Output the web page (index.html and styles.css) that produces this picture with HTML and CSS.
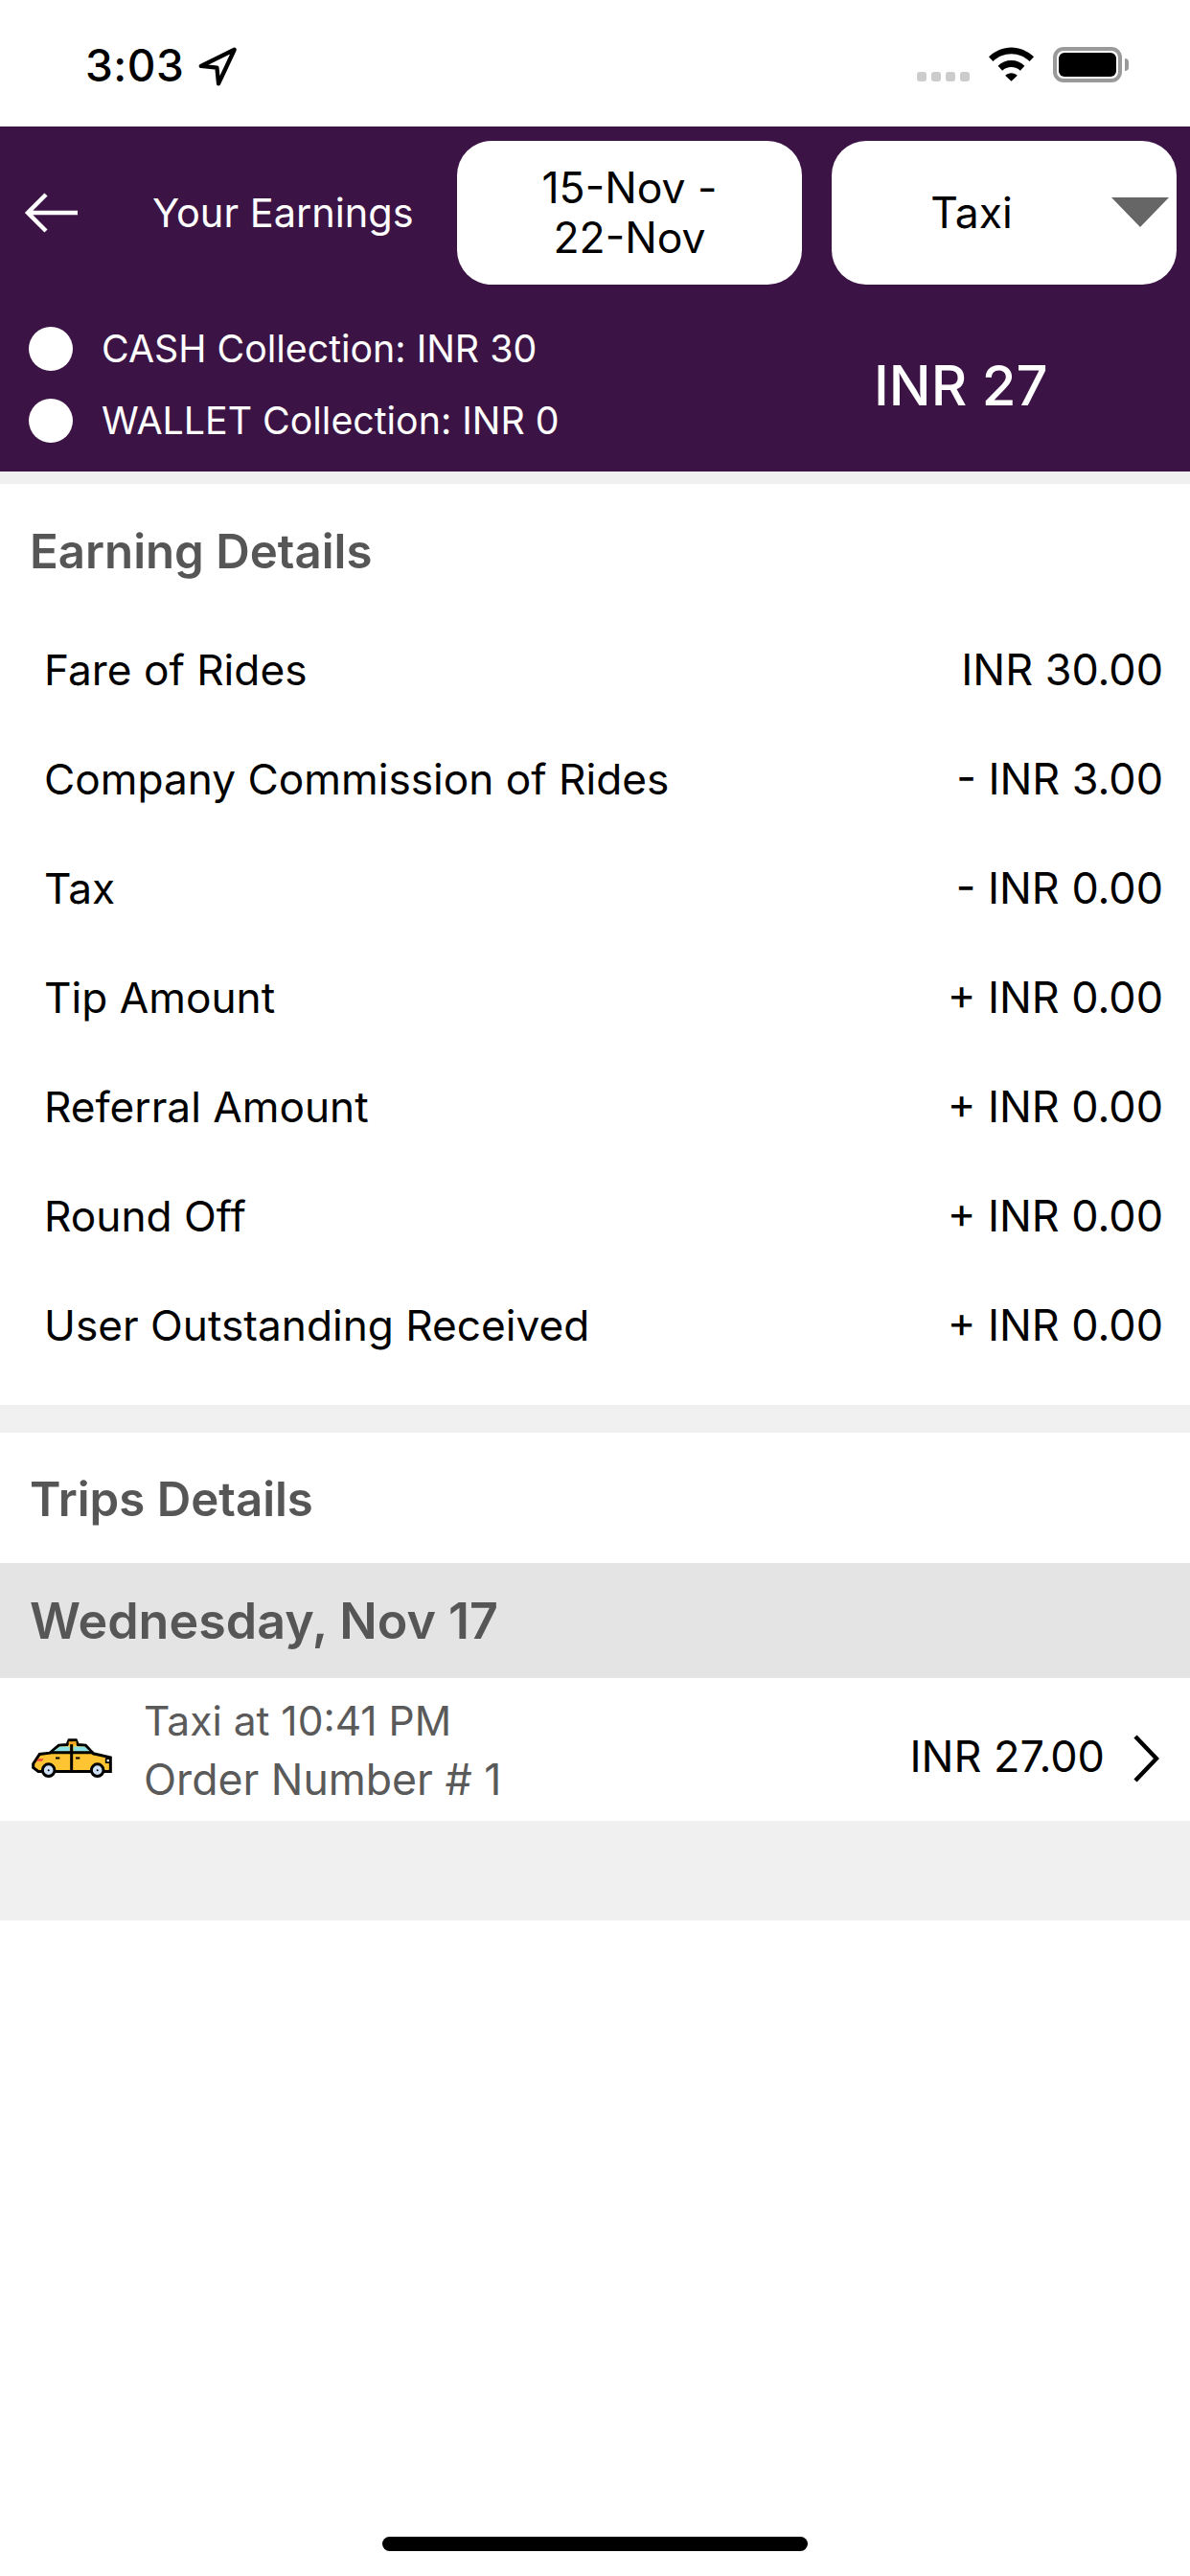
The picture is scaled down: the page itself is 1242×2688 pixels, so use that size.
FILE: index.html
```html
<!DOCTYPE html>
<html lang="en">
<head>
<meta charset="utf-8">
<title>Your Earnings</title>
<link rel="stylesheet" href="styles.css">
</head>
<body>
<div class="page">
  <div class="status">
    <div class="status-left">
      <span class="time">3:03</span>
      <svg class="loc" viewBox="0 0 40 40"><path d="M36 3.500 3.500 19.500 19 21 20.500 36.500Z" fill="none" stroke="#000" stroke-width="4" stroke-linejoin="round"/></svg>
    </div>
    <div class="status-right">
      <div class="dots"><i></i><i></i><i></i><i></i></div>
      <svg class="wifi" viewBox="0 0 48 36"><path d="M24 0C15 0 7 3.500 0 10l4.500 5C10 9.800 16.500 7 24 7s14 2.800 19.500 8l4.500-5C41 3.500 33 0 24 0ZM24 14c-5.500 0-10.400 2-14.200 5.800l4.700 5C17 22.300 20.300 21 24 21s7 1.300 9.500 3.800l4.700-5C34.400 16 29.500 14 24 14ZM24 27.500c-2.500 0-4.700 1-6.500 2.600L24 36l6.500-5.900c-1.800-1.600-4-2.600-6.500-2.600Z"/></svg>
      <div class="battery"><div class="battery-fill"></div></div>
      <div class="battery-cap"></div>
    </div>
  </div>

  <header class="header">
    <div class="top-row">
      <svg class="back" viewBox="0 0 58 44"><path d="M56 22H4M23 3 4 22l19 19" fill="none" stroke="#fff" stroke-width="4.500"/></svg>
      <span class="title">Your Earnings</span>
      <button class="pill pill-date">15-Nov -<br>22-Nov</button>
      <button class="pill pill-type"><span>Taxi</span><i class="caret"></i></button>
    </div>
    <div class="bottom-row">
      <div class="collections">
        <div class="collection"><i class="dot"></i><span>CASH Collection: INR 30</span></div>
        <div class="collection"><i class="dot"></i><span>WALLET Collection: INR 0</span></div>
      </div>
      <div class="total">INR 27</div>
    </div>
  </header>

  <section class="card earnings">
    <h2 class="section-title">Earning Details</h2>
    <div class="rows">
      <div class="row"><span>Fare of Rides</span><span class="amt">INR 30.00</span></div>
      <div class="row"><span>Company Commission of Rides</span><span class="amt">- INR 3.00</span></div>
      <div class="row"><span>Tax</span><span class="amt">- INR 0.00</span></div>
      <div class="row"><span>Tip Amount</span><span class="amt">+ INR 0.00</span></div>
      <div class="row"><span>Referral Amount</span><span class="amt">+ INR 0.00</span></div>
      <div class="row"><span>Round Off</span><span class="amt">+ INR 0.00</span></div>
      <div class="row"><span>User Outstanding Received</span><span class="amt">+ INR 0.00</span></div>
    </div>
  </section>

  <section class="card trips">
    <h2 class="section-title">Trips Details</h2>
    <div class="date-bar">Wednesday, Nov 17</div>
    <div class="trip">
      <svg class="taxi" viewBox="36 40 258 125">
        <path d="M44 122 64 92 96 88 124 64 150 62 156 48H178L184 62 208 64 232 90 286 102V146H60L44 134Z" fill="#ffc431" stroke="#000" stroke-width="9"/>
        <path d="M106 84 128 68H158V84ZM170 68H205L222 84H170Z" fill="#8ce1e6"/>
        <path d="M96 87H232M164 50V148" fill="none" stroke="#000" stroke-width="9"/>
        <path d="M155 52h24v9h-24z" fill="#f5a623"/>
        <path d="M114 104h13M177 104h13" stroke="#000" stroke-width="6"/>
        <path d="M60 106h16l-4 8H55z" fill="#f0483e"/>
        <path d="M272 106h12v12h-12z" fill="#fff" stroke="#000" stroke-width="5"/>
        <circle cx="92" cy="142" r="19" fill="#cfe0f7" stroke="#000" stroke-width="9"/>
        <circle cx="92" cy="142" r="3" fill="#000"/>
        <circle cx="245" cy="142" r="19" fill="#cfe0f7" stroke="#000" stroke-width="9"/>
        <circle cx="245" cy="142" r="3" fill="#000"/>
      </svg>
      <div class="trip-info">
        <div class="trip-time">Taxi at 10:41 PM</div>
        <div class="trip-order">Order Number # 1</div>
      </div>
      <div class="trip-amount">INR 27.00</div>
      <svg class="chev" viewBox="0 0 28 52"><path d="M3 3 25 26 3 49" fill="none" stroke="#000" stroke-width="4.500"/></svg>
    </div>
  </section>

  <div class="band"></div>
  <div class="spacer"></div>
  <div class="home-wrap"><div class="home-bar"></div></div>
</div>
</body>
</html>
```
FILE: styles.css
```css
* { box-sizing: border-box; }
html, body { margin: 0; padding: 0; background: #fff; }
body { font-family: Inter, "Noto Sans", sans-serif; color: #000; }
.page { width: 1242px; height: 2688px; display: flex; flex-direction: column; overflow: hidden; background: #f0f0f0; }

.status { height: 132px; flex: none; display: flex; justify-content: space-between; padding: 46px 64px 0 89px; background: #fff; }
.status-left { display: flex; align-items: flex-start; gap: 14px; }
.time { font-size: 46px; line-height: 44px; font-weight: 500; letter-spacing: 0.5px; }
.loc { width: 43px; height: 43px; margin-top: 2px; }
.status-right { display: flex; align-items: flex-start; }
.dots { display: flex; gap: 5px; margin-top: 29px; margin-right: 20px; }
.dots i { width: 10px; height: 10px; border-radius: 3px; background: #ccc; display: block; }
.wifi { width: 47px; height: 36px; margin-top: 3px; margin-right: 20px; }
.battery { width: 72px; height: 37px; margin-top: 3px; border: 4px solid #9a9a9a; border-radius: 11px; padding: 2px; }
.battery-fill { width: 100%; height: 100%; background: #000; border-radius: 6px; }
.battery-cap { width: 4px; height: 13px; margin-top: 15px; margin-left: 3px; background: #9a9a9a; border-radius: 0 4px 4px 0; }

.header { height: 360px; flex: none; background: #3b1445; display: flex; flex-direction: column; color: #fff; }
.top-row { display: flex; align-items: center; height: 150px; margin-top: 15px; padding-left: 25px; }
.back { width: 58px; height: 44px; flex: none; }
.title { font-size: 41.500px; margin-left: 76px; width: 318px; flex: none; font-weight: 400; white-space: nowrap; }
.pill { border: 0; background: #fff; border-radius: 36px; width: 360px; height: 150px; font: 400 44.500px/52px Inter, sans-serif; color: #000; flex: none; padding: 0; }
.pill-type { margin-left: 31px; position: relative; }
.caret { position: absolute; right: 8px; top: 59px; width: 0; height: 0; border-left: 30px solid transparent; border-right: 30px solid transparent; border-top: 31px solid #666; }
.pill-type span { position: relative; left: -34px; }

.bottom-row { display: flex; flex: 1; }
.collections { width: 912px; padding: 44px 0 0 30px; display: flex; flex-direction: column; gap: 30px; }
.collection { display: flex; align-items: center; gap: 30px; height: 45px; font-size: 39.300px; }
.dot { width: 46px; height: 46px; background: #fff; border-radius: 50%; display: block; flex: none; }
.total { font-size: 58px; font-weight: 500; padding-top: 69px; line-height: 72px; }

.card { background: #fff; flex: none; }
.earnings { margin-top: 13px; height: 961px; }
.trips { margin-top: 29px; }
.section-title { margin: 0; padding: 0 0 0 31px; font-size: 49.200px; font-weight: 600; color: #565656; }
.earnings .section-title { height: 95px; padding-top: 40px; line-height: 60px; box-sizing: content-box; }
.rows { padding: 2px 28px 0 46px; }
.row { display: flex; justify-content: space-between; align-items: center; height: 114px; font-size: 44.200px; font-weight: 400; }
.amt { font-size: 44.900px; }

.trips .section-title { height: 136px; line-height: 138px; }
.date-bar { height: 120px; background: #e4e4e4; color: #565656; font-size: 52px; font-weight: 600; line-height: 122px; padding-left: 31px; }
.trip { height: 149px; display: flex; align-items: center; padding: 0 32px 0 32px; background: #fff; }
.taxi { width: 86px; height: 42px; flex: none; margin-top: 17px; }
.trip-info { margin-left: 32px; flex: 1; color: #5a5a5a; margin-top: 6px; }
.trip-time { line-height: 50px; font-size: 42.500px; }
.trip-order { line-height: 60px; font-size: 44.600px; margin-top: 6px; }
.trip-amount { font-size: 45px; margin-right: 29px; margin-top: 14px; }
.chev { width: 28px; height: 52px; flex: none; margin-top: 18px; }

.band { height: 104px; background: #f0f0f0; flex: none; }
.spacer { flex: 1; background: #fff; }
.home-wrap { background: #fff; display: flex; justify-content: center; height: 41px; flex: none; }
.home-bar { width: 444px; height: 15px; background: #000; border-radius: 8px; }
```
